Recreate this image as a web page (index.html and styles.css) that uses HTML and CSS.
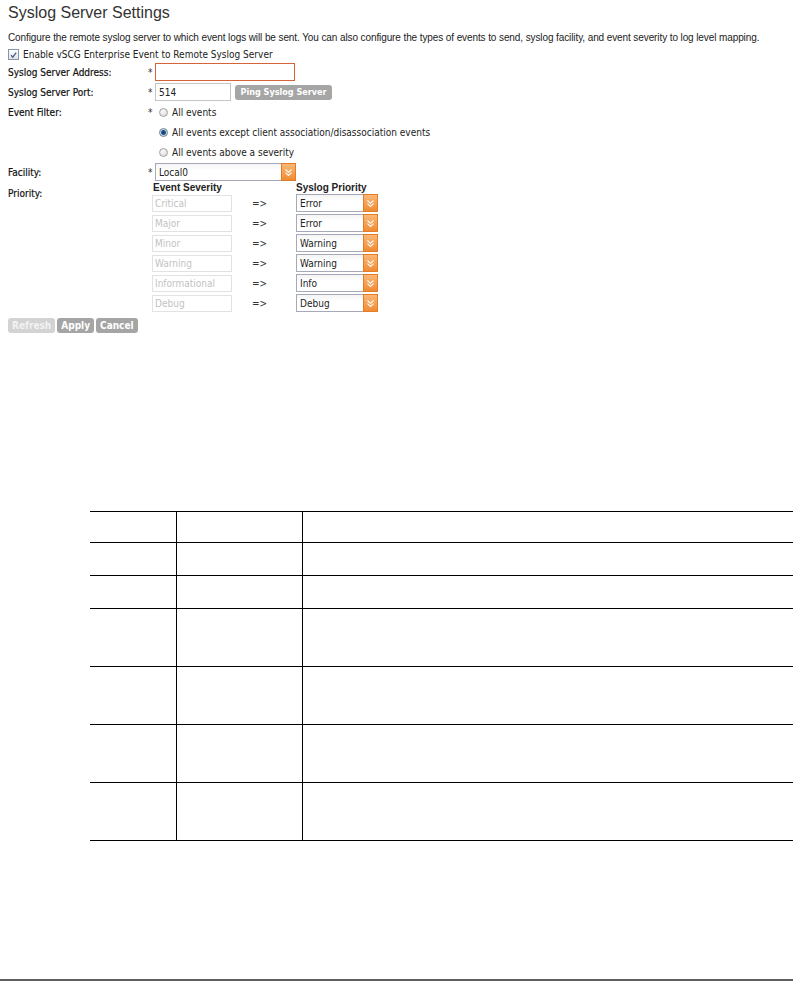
FILE: index.html
```html
<!DOCTYPE html>
<html>
  <head>
    <meta charset="UTF-8">
    <title>Syslog Server Settings</title>
    <link rel="stylesheet" href="styles.css">
  </head>
  <body>
    <h1 class="title">Syslog Server Settings</h1>
    <p class="intro">Configure the remote syslog server to which event logs will be sent. You can also configure the types of events to send, syslog facility, and event severity to log level mapping.</p>

    <div class="enable">
        <span class="check">
            <svg width="10" height="10" viewBox="0 0 10 10"><path d="M2.2 5.2 L4.2 7.4 L8 2.4" fill="none" stroke="#4b5d80" stroke-width="1.4"/></svg>
        </span>
        <span>Enable vSCG Enterprise Event to Remote Syslog Server</span>
    </div>

    <div class="form">
        <div class="row">
            <span class="label">Syslog Server Address:</span>
            <span class="req">*</span>
            <input type="text" class="text address" value="" />
        </div>
        <div class="row">
            <span class="label">Syslog Server Port:</span>
            <span class="req">*</span>
            <input type="text" class="text port" value="514" />
            <span class="btn ping">Ping Syslog Server</span>
        </div>
        <div class="row">
            <span class="label">Event Filter:</span>
            <span class="req">*</span>
            <span class="radio"></span><span>All events</span>
        </div>
        <div class="row">
            <span class="label"></span>
            <span class="req"></span>
            <span class="radio checked"></span><span>All events except client association/disassociation events</span>
        </div>
        <div class="row">
            <span class="label"></span>
            <span class="req"></span>
            <span class="radio"></span><span>All events above a severity</span>
        </div>
        <div class="row">
            <span class="label">Facility:</span>
            <span class="req">*</span>
            <div class="select facility">
                <span class="value">Local0</span>
                <span class="arrow"><svg width="9" height="9" viewBox="0 0 9 9"><path d="M1.5 1.5 L4.5 4.3 L7.5 1.5 M1.5 4.6 L4.5 7.4 L7.5 4.6" fill="none" stroke="#fff" stroke-width="1.1"/></svg></span>
            </div>
        </div>
        <div class="priority">
            <span class="label prio-label">Priority:</span>
            <div class="severity">
                <span class="head">Event Severity</span>
                <span></span>
                <span class="head">Syslog Priority</span>

                <input type="text" class="sev" value="Critical" disabled />
                <span class="map">=&gt;</span>
                <div class="select small">
                    <span class="value">Error</span>
                    <span class="arrow"><svg width="9" height="9" viewBox="0 0 9 9"><path d="M1.5 1.5 L4.5 4.3 L7.5 1.5 M1.5 4.6 L4.5 7.4 L7.5 4.6" fill="none" stroke="#fff" stroke-width="1.1"/></svg></span>
                </div>

                <input type="text" class="sev" value="Major" disabled />
                <span class="map">=&gt;</span>
                <div class="select small">
                    <span class="value">Error</span>
                    <span class="arrow"><svg width="9" height="9" viewBox="0 0 9 9"><path d="M1.5 1.5 L4.5 4.3 L7.5 1.5 M1.5 4.6 L4.5 7.4 L7.5 4.6" fill="none" stroke="#fff" stroke-width="1.1"/></svg></span>
                </div>

                <input type="text" class="sev" value="Minor" disabled />
                <span class="map">=&gt;</span>
                <div class="select small">
                    <span class="value">Warning</span>
                    <span class="arrow"><svg width="9" height="9" viewBox="0 0 9 9"><path d="M1.5 1.5 L4.5 4.3 L7.5 1.5 M1.5 4.6 L4.5 7.4 L7.5 4.6" fill="none" stroke="#fff" stroke-width="1.1"/></svg></span>
                </div>

                <input type="text" class="sev" value="Warning" disabled />
                <span class="map">=&gt;</span>
                <div class="select small">
                    <span class="value">Warning</span>
                    <span class="arrow"><svg width="9" height="9" viewBox="0 0 9 9"><path d="M1.5 1.5 L4.5 4.3 L7.5 1.5 M1.5 4.6 L4.5 7.4 L7.5 4.6" fill="none" stroke="#fff" stroke-width="1.1"/></svg></span>
                </div>

                <input type="text" class="sev" value="Informational" disabled />
                <span class="map">=&gt;</span>
                <div class="select small">
                    <span class="value">Info</span>
                    <span class="arrow"><svg width="9" height="9" viewBox="0 0 9 9"><path d="M1.5 1.5 L4.5 4.3 L7.5 1.5 M1.5 4.6 L4.5 7.4 L7.5 4.6" fill="none" stroke="#fff" stroke-width="1.1"/></svg></span>
                </div>

                <input type="text" class="sev" value="Debug" disabled />
                <span class="map">=&gt;</span>
                <div class="select small">
                    <span class="value">Debug</span>
                    <span class="arrow"><svg width="9" height="9" viewBox="0 0 9 9"><path d="M1.5 1.5 L4.5 4.3 L7.5 1.5 M1.5 4.6 L4.5 7.4 L7.5 4.6" fill="none" stroke="#fff" stroke-width="1.1"/></svg></span>
                </div>
            </div>
        </div>
    </div>

    <div class="actions">
        <span class="btn disabled">Refresh</span>
        <span class="btn">Apply</span>
        <span class="btn">Cancel</span>
    </div>

    <table class="grid">
        <tr class="short"><td></td><td></td><td></td></tr>
        <tr class="mid"><td></td><td></td><td></td></tr>
        <tr class="mid"><td></td><td></td><td></td></tr>
        <tr class="tall"><td></td><td></td><td></td></tr>
        <tr class="tall"><td></td><td></td><td></td></tr>
        <tr class="tall"><td></td><td></td><td></td></tr>
        <tr class="tall"><td></td><td></td><td></td></tr>
    </table>

    <div class="page-end"></div>
  </body>
</html>
```

FILE: styles.css
```css
body {
    margin: 0;
    padding: 0 8px;
    background: #fff;
    color: #222;
    font-family: "DejaVu Sans Condensed", "DejaVu Sans", sans-serif;
    font-size: 10px;
    overflow: hidden;
}

.title {
    margin: 3px 0 0;
    font: normal 16px/20px "Liberation Sans", Arial, sans-serif;
    color: #333;
}

.intro {
    margin: 8px 0 0;
    font: 10px/14px "Liberation Sans", Arial, sans-serif;
    letter-spacing: -0.1px;
    white-space: nowrap;
    color: #222;
}

.enable {
    display: flex;
    align-items: center;
    height: 18px;
}

.check {
    width: 9px;
    height: 9px;
    border: 1px solid #8795ab;
    background: linear-gradient(#fff, #dfe3ea);
    margin-right: 4px;
    display: flex;
}

.form {
    margin-top: -1px;
}

.row {
    display: flex;
    align-items: center;
    height: 20px;
}

.label {
    width: 140px;
    flex-shrink: 0;
    color: #111;
    -webkit-text-stroke: 0.2px #111;
}

.req {
    width: 7px;
    flex-shrink: 0;
    color: #333;
}

input.text {
    box-sizing: border-box;
    height: 18px;
    padding: 0 3px;
    margin: 0;
    font: inherit;
    color: #222;
    background: #fff;
    border: 1px solid #c4c4c4;
}

input.address {
    width: 140px;
    border-color: #d6633a;
}

input.port {
    width: 76px;
    margin-right: 4px;
}

.btn {
    display: inline-flex;
    align-items: center;
    justify-content: center;
    height: 15px;
    padding: 0 4px;
    border-radius: 3px;
    background: #a5a5a5;
    color: #fff;
    font-weight: bold;
}

.btn.ping {
    width: 97px;
    padding: 0;
    font-size: 9px;
    white-space: nowrap;
}

.btn.disabled {
    background: #d3d3d3;
    color: #f2f2f2;
}

.radio {
    box-sizing: border-box;
    width: 9px;
    height: 9px;
    margin: 0 4px 0 4px;
    border-radius: 50%;
    border: 1px solid #a3a3a3;
    background: radial-gradient(circle at 40% 35%, #fafafa, #d4d4d4);
}

.radio.checked {
    border-color: #6b7f95;
    background: radial-gradient(circle, #0d3d6e 0, #1f5a8f 2px, #c9d6e2 3px, #eef2f6 4px);
}

.select {
    display: flex;
    height: 18px;
    box-sizing: border-box;
}

.select .value {
    flex: 1;
    display: flex;
    align-items: center;
    padding-left: 3px;
    border: 1px solid #a6a9b8;
    border-right: none;
    background: linear-gradient(#f4f4f4, #fff 40%, #fff);
    color: #222;
}

.select .arrow {
    width: 15px;
    display: flex;
    align-items: center;
    justify-content: center;
    background: linear-gradient(#f9b878, #f18c33);
    border: 1px solid #e47c25;
    box-sizing: border-box;
}

.select.facility {
    width: 141px;
}

.select.small {
    width: 82px;
    height: 18px;
}

.priority {
    display: flex;
}

.prio-label {
    padding-top: 6px;
}

.severity {
    margin-left: -143px;
    padding-left: 147px;
    display: grid;
    grid-template-columns: 80px 64px 82px;
    grid-auto-rows: 20px;
    grid-template-rows: 12px;
    align-items: start;
}

.severity .head {
    font-family: "Liberation Sans", Arial, sans-serif;
    font-size: 10px;
    font-weight: bold;
    line-height: 12px;
    color: #222;
}

.severity .head:first-child {
    padding-left: 1px;
}

input.sev {
    box-sizing: border-box;
    width: 80px;
    height: 17px;
    margin: 1px 0 0;
    padding: 0 2px;
    font: inherit;
    color: #c2c2c2;
    background: #fff;
    border: 1px solid #e2e2e2;
}

.map {
    padding: 4px 0 0 20px;
    color: #333;
}

.actions {
    display: flex;
    gap: 2px;
    margin-top: 4px;
}

.grid {
    margin: 178px 0 0 82px;
    width: 706px;
    border-collapse: collapse;
}

.grid td {
    padding: 0;
    border-top: 1px solid #000;
    border-bottom: 1px solid #000;
}

.grid td:nth-child(1) {
    width: 86px;
}

.grid td:nth-child(2) {
    width: 125px;
    border-left: 1px solid #000;
    border-right: 1px solid #000;
}

.grid tr.short td {
    height: 30px;
}

.grid tr.mid td {
    height: 32px;
}

.grid tr.tall td {
    height: 57px;
}

.page-end {
    margin: 138px -8px 0;
    border-top: 2px solid #5f5f5f;
}
```
